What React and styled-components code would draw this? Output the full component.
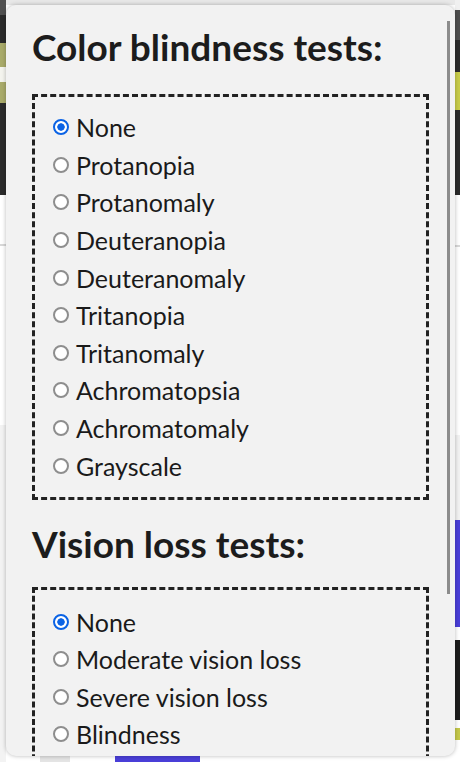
import React from 'react';
import styled, { createGlobalStyle } from 'styled-components';

const GlobalStyle = createGlobalStyle`
  html, body {
    margin: 0;
    padding: 0;
  }
  body {
    width: 460px;
    height: 762px;
    overflow: hidden;
    font-family: Lato, "Open Sans", sans-serif;
    background-color: #ffffff;
    background-image:
      linear-gradient(
        to bottom,
        #505050 0px, #505050 15px,
        #2b2b2b 15px, #2b2b2b 43px,
        #a9ab6a 43px, #a9ab6a 67px,
        #f4f4ee 67px, #f4f4ee 82px,
        #a9ab6a 82px, #a9ab6a 103px,
        #2b2b2b 103px, #2b2b2b 195px,
        #ffffff 195px, #ffffff 244px,
        #d8d8d8 244px, #d8d8d8 246px,
        #ffffff 246px, #ffffff 425px,
        #f3f3f3 425px, #f3f3f3 762px
      ),
      linear-gradient(
        to bottom,
        #f0f0f0 0px, #f0f0f0 10px,
        #4e4e4e 10px, #4e4e4e 40px,
        #2b2b2b 40px, #2b2b2b 72px,
        #c8cc4a 72px, #c8cc4a 110px,
        #2b2b2b 110px, #2b2b2b 195px,
        #ffffff 195px, #ffffff 245px,
        #d8d8d8 245px, #d8d8d8 247px,
        #ffffff 247px, #ffffff 435px,
        #f2f2f2 435px, #f2f2f2 520px,
        #4a3fd8 520px, #4a3fd8 627px,
        #ffffff 627px, #ffffff 640px,
        #1e1e1e 640px, #1e1e1e 720px,
        #ffffff 720px, #ffffff 728px,
        #c4c84a 728px, #c4c84a 740px,
        #ffffff 740px
      ),
      linear-gradient(
        to right,
        #ffffff 0, #ffffff 40px,
        #e4e4e4 40px, #e4e4e4 70px,
        #ffffff 70px, #ffffff 115px,
        #4a3fd8 115px, #4a3fd8 200px,
        #ffffff 200px
      ),
      linear-gradient(to right, #e8e8e8 0, #e8e8e8 100%);
    background-size: 6px 762px, 5px 762px, 460px 6px, 460px 5px;
    background-position: 0 0, 455px 0, 0 756px, 0 0;
    background-repeat: no-repeat;
  }
`;

const Page = styled.div`
  box-sizing: border-box;
  height: 762px;
  padding: 5px 5px 6px 6px;
`;

const Panel = styled.div`
  height: 751px;
  display: flex;
  background: #f2f2f2;
  border-radius: 10px;
  box-shadow: 0 0 4px rgba(0, 0, 0, 0.28);
  overflow: hidden;
`;

const Content = styled.div`
  flex: 1;
  padding: 20px 0 0 26px;
  color: #1a1a1a;
`;

const ScrollTrack = styled.div`
  width: 8px;
  padding-top: 16px;
  flex-shrink: 0;
`;

const ScrollThumb = styled.div`
  width: 2.5px;
  height: 573px;
  background: #8c8c8c;
`;

const Heading = styled.h2`
  margin: 0 0 ${p => p.$gap}px;
  font-family: Lato, sans-serif;
  font-weight: 700;
  font-size: 37px;
  line-height: 1.2;
  color: #1c1c1c;
`;

const Options = styled.div`
  box-sizing: border-box;
  width: 397px;
  border: 3px dashed #222;
  padding: ${p => p.$top}px 0 13px 18px;
  margin-bottom: 22px;
`;

const Row = styled.label`
  display: flex;
  align-items: center;
  gap: 7px;
  height: 37.6px;
  font-size: 25px;
  line-height: 1.2;
  color: #1a1a1a;
`;

const Radio = styled.input.attrs({ type: 'radio' })`
  appearance: none;
  flex-shrink: 0;
  margin: 0;
  box-sizing: border-box;
  width: 16px;
  height: 16px;
  border-radius: 50%;
  border: 2px solid #8e8e8e;
  background: #ffffff;

  &:checked {
    border: 2px solid #0b63e5;
    background: radial-gradient(circle, #0b63e5 0 3.4px, #ffffff 4px);
  }
`;

const colorTests = [
  'None',
  'Protanopia',
  'Protanomaly',
  'Deuteranopia',
  'Deuteranomaly',
  'Tritanopia',
  'Tritanomaly',
  'Achromatopsia',
  'Achromatomaly',
  'Grayscale',
];

const visionTests = ['None', 'Moderate vision loss', 'Severe vision loss', 'Blindness'];

function TestGroup({ title, name, options, gap, top }) {
  return (
    <>
      <Heading $gap={gap}>{title}</Heading>
      <Options $top={top}>
        {options.map((opt, i) => (
          <Row key={opt}>
            <Radio name={name} defaultChecked={i === 0} />
            {opt}
          </Row>
        ))}
      </Options>
    </>
  );
}

export default function App() {
  return (
    <>
      <GlobalStyle />
      <Page>
        <Panel>
          <Content>
            <TestGroup title="Color blindness tests:" name="color" options={colorTests} gap={25} top={11} />
            <TestGroup title="Vision loss tests:" name="vision" options={visionTests} gap={20} top={13} />
          </Content>
          <ScrollTrack>
            <ScrollThumb />
          </ScrollTrack>
        </Panel>
      </Page>
    </>
  );
}
